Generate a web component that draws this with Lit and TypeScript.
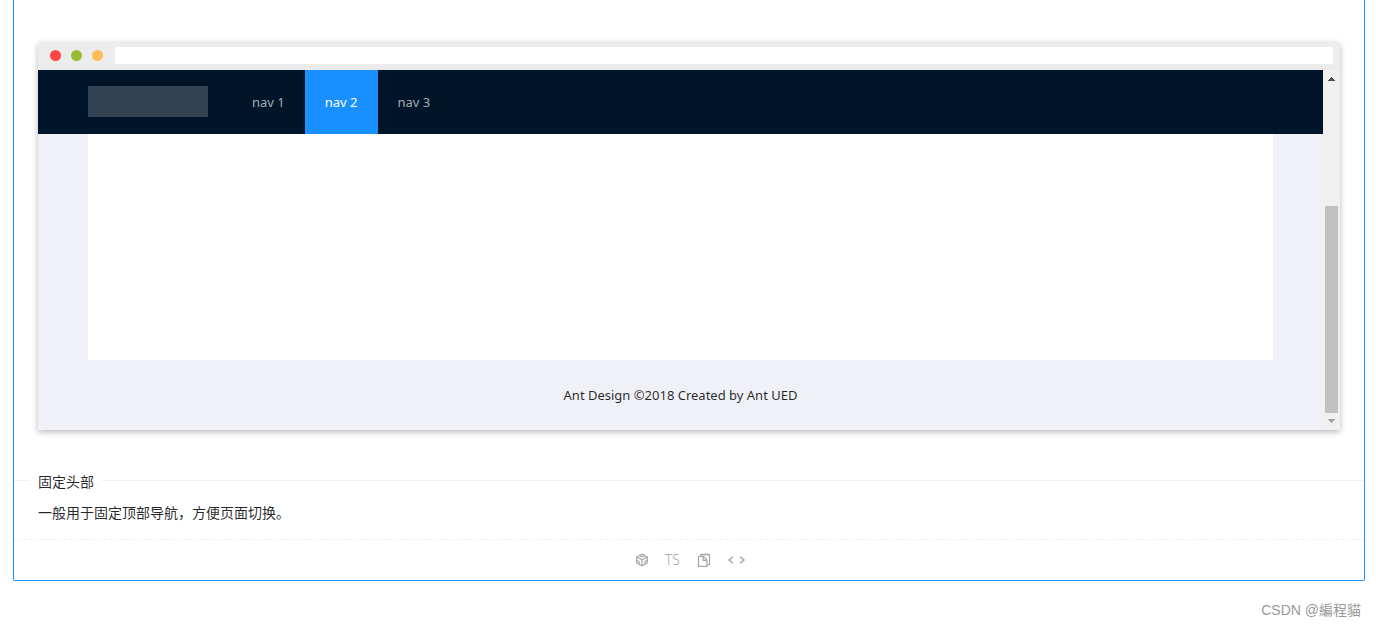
import { LitElement, html, css } from "lit";
import { customElement, property, state } from "lit/decorators.js";

@customElement("browser-mockup")
class BrowserMockup extends LitElement {
  static styles = css`
    :host {
      display: block;
      border-radius: 3px 3px 0 0;
      box-shadow: 0 2px 6px rgba(0, 0, 0, 0.28);
    }
    .chrome {
      display: flex;
      align-items: center;
      gap: 10px;
      height: 28px;
      box-sizing: border-box;
      padding: 0 7px 1px 12px;
      background: #ececec;
      border-radius: 3px 3px 0 0;
    }
    .dot {
      width: 11px;
      height: 11px;
      border-radius: 50%;
    }
    .close { background: #ff4444; }
    .open { background: #99bb33; }
    .wait { background: #ffbb55; }
    .address {
      flex: 1;
      min-width: 0;
      height: 17px;
      box-sizing: border-box;
      margin-left: 2px;
      padding: 0 6px;
      border: 0;
      border-radius: 1px;
      background: #fff;
      outline: none;
    }
    .viewport {
      display: grid;
      grid-template-columns: 1fr 17px;
      height: 360px;
    }
    .scrollbar {
      display: flex;
      flex-direction: column;
      align-items: center;
      background: #f0f0f0;
    }
    .arrow {
      display: block;
      width: 17px;
      height: 17px;
    }
    .track {
      display: flex;
      flex: 1;
      flex-direction: column;
      justify-content: flex-end;
    }
    .thumb {
      width: 13px;
      height: 207px;
      background: #c1c1c1;
    }
  `;

  render() {
    return html`
      <div class="chrome">
        <span class="dot close"></span>
        <span class="dot open"></span>
        <span class="dot wait"></span>
        <input class="address" type="text" aria-label="Address" />
      </div>
      <div class="viewport">
        <slot></slot>
        <div class="scrollbar" aria-hidden="true">
          <svg class="arrow" viewBox="0 0 17 17" shape-rendering="crispEdges">
            <path d="M8 7h1v1h1v1h1v1h1v1H5v-1h1V9h1V8h1z" fill="#505050" />
          </svg>
          <div class="track"><div class="thumb"></div></div>
          <svg class="arrow" viewBox="0 0 17 17" shape-rendering="crispEdges">
            <path d="M5 6h7v1h-1v1h-1v1H9v1H8V9H7V8H6V7H5z" fill="#a3a3a3" />
          </svg>
        </div>
      </div>
    `;
  }
}

@customElement("fixed-layout")
class FixedLayout extends LitElement {
  @property({ type: Array }) items = ["nav 1", "nav 2", "nav 3"];
  @state() private selected = 1;

  static styles = css`
    :host {
      display: flex;
      flex-direction: column;
      min-width: 0;
      background: #f0f1f6;
    }
    .header {
      display: flex;
      align-items: center;
      gap: 24px;
      height: 64px;
      padding: 0 50px;
      background: #001529;
    }
    .logo {
      width: 120px;
      height: 31px;
      margin-bottom: 1px;
      background: rgba(255, 255, 255, 0.2);
    }
    .menu {
      display: flex;
      align-self: stretch;
    }
    .item {
      padding: 0 20px;
      border: 0;
      background: none;
      color: rgba(255, 255, 255, 0.65);
      font: 13px/64px "Noto Sans", sans-serif;
      cursor: pointer;
    }
    .item[aria-current="page"] {
      background: #1890ff;
      color: #fff;
    }
    .content {
      flex: 1;
      margin: 0 50px;
      background: #fff;
    }
    .footer {
      padding: 24px 50px;
      text-align: center;
      line-height: 22px;
    }
  `;

  render() {
    return html`
      <header class="header">
        <div class="logo"></div>
        <nav class="menu">
          ${this.items.map(
            (label, i) => html`<button
              class="item"
              aria-current=${i === this.selected ? "page" : "false"}
              @click=${() => (this.selected = i)}
            >${label}</button>`
          )}
        </nav>
      </header>
      <main class="content"></main>
      <footer class="footer">Ant Design ©2018 Created by Ant UED</footer>
    `;
  }
}

@customElement("app-root")
class AppRoot extends LitElement {
  static styles = css`
    :host {
      display: block;
      padding: 0 11px 0 13px;
      background: #fff;
      color: rgba(0, 0, 0, 0.85);
      font: 13px/22px "Noto Sans", "Noto Sans CJK SC", sans-serif;
    }
    .card {
      border: 1px solid #1890ff;
      border-top: 0;
      border-radius: 0 0 2px 2px;
    }
    .demo {
      padding: 42px 24px 39px;
    }
    .heading {
      display: flex;
      align-items: center;
      gap: 8px;
    }
    .heading::before,
    .heading::after {
      content: "";
      height: 1px;
      margin-bottom: 2px;
      background: #f0f0f0;
    }
    .heading::before {
      width: 16px;
    }
    .heading::after {
      flex: 1;
    }
    .title {
      margin: 0;
      font: 14px/24px "Noto Sans CJK SC", sans-serif;
    }
    .description {
      margin: 0;
      padding: 8px 24px 16px;
      font: 14px/22px "Noto Sans CJK SC", sans-serif;
    }
    .actions {
      display: flex;
      justify-content: center;
      align-items: center;
      gap: 15px;
      height: 40px;
      padding-left: 2px;
      border-top: 1px dashed #f0f0f0;
    }
    .action {
      display: flex;
      align-items: center;
      justify-content: center;
      height: 22px;
      padding: 0;
      border: 0;
      background: none;
      color: #a6a6a6;
      font: 300 14px/22px "Open Sans", sans-serif;
      cursor: pointer;
    }
    .text {
      min-width: 18px;
      color: #999;
    }
    .icon {
      display: block;
      width: 14px;
      height: 14px;
      fill: none;
      stroke: currentColor;
    }
    .wide {
      width: 20px;
    }
    .watermark {
      margin: 0;
      padding: 18px 4px 0 0;
      text-align: right;
      color: #999;
      font: 14px/22px "Liberation Sans", "Noto Sans CJK TC", sans-serif;
    }
  `;

  render() {
    return html`
      <section class="card">
        <div class="demo">
          <browser-mockup><fixed-layout></fixed-layout></browser-mockup>
        </div>
        <div class="heading"><h2 class="title">固定头部</h2></div>
        <p class="description">一般用于固定顶部导航，方便页面切换。</p>
        <div class="actions">
          <button class="action" aria-label="CodeSandbox">
            <svg class="icon" viewBox="0 0 14 14" stroke-width="1.2">
              <path d="M7 1.1 12.3 4v6L7 12.9 1.7 10V4z" />
              <path d="M1.7 4 7 6.9 12.3 4M7 6.9v6M4.4 2.5 7 3.9l2.6-1.4M1.7 7.2l2.4 1.3v2.8M12.3 7.2 9.9 8.5v2.8" />
            </svg>
          </button>
          <button class="action text" aria-label="TypeScript">TS</button>
          <button class="action" aria-label="Copy code">
            <svg class="icon" viewBox="0 0 14 14" stroke-width="1.2">
              <path d="M3.6 3V1.6h8.9v10.1H10M5.5.4v2M8 .4v2M10.5.4v2" />
              <path d="M1.5 3.5h5L9.9 7v6.4H1.5zM6.1 3.5v3.8h3.8" />
            </svg>
          </button>
          <button class="action" aria-label="Show code">
            <svg class="icon wide" viewBox="0 0 20 14">
              <path d="M6.8 3.7 3 7l3.8 3.3M14.2 3.7 18 7l-3.8 3.3" stroke-width="1.5" />
            </svg>
          </button>
        </div>
      </section>
      <p class="watermark">CSDN @編程貓</p>
    `;
  }
}
